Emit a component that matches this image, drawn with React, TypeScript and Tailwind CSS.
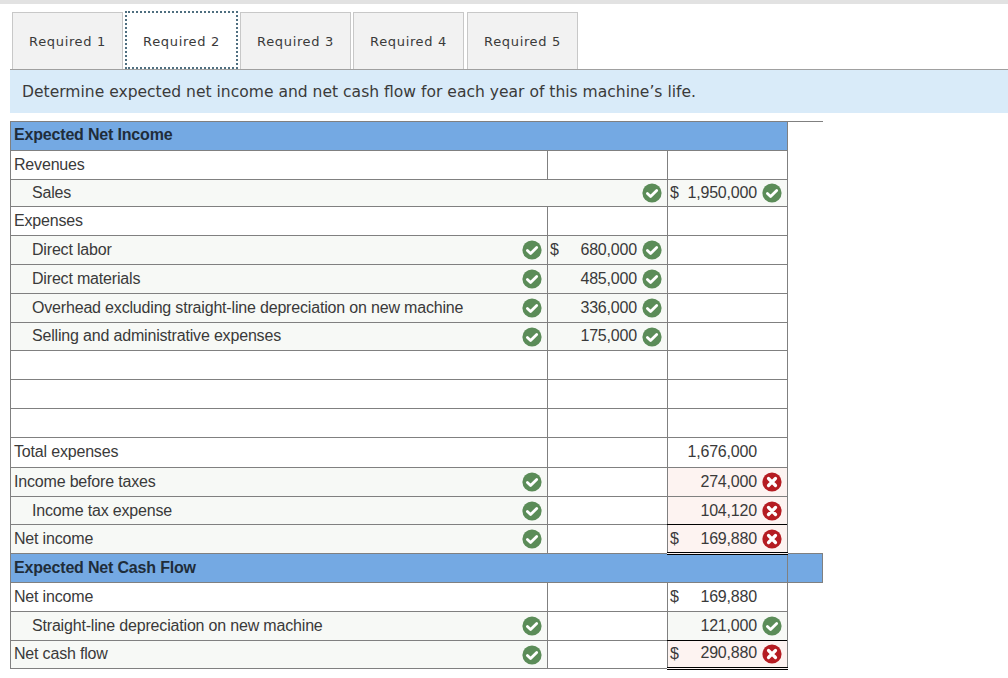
import clsx from "clsx";

type Mark = "ok" | "bad";

type Row = {
  label?: string;
  indent?: boolean;
  height: string;
  lift?: boolean;
  labelMark?: Mark;
  mid?: { dollar?: boolean; value: string; mark?: Mark };
  last?: { dollar?: boolean; value: string; mark?: Mark; top?: boolean; double?: boolean };
  wide?: boolean;
};

const tabs = ["Required 1", "Required 2", "Required 3", "Required 4", "Required 5"];

const incomeRows: Row[] = [
  { label: "Revenues", height: "h-[29px]" },
  { label: "Sales", indent: true, height: "h-[27px]", wide: true, last: { dollar: true, value: "1,950,000", mark: "ok" } },
  { label: "Expenses", height: "h-[29px]" },
  { label: "Direct labor", indent: true, height: "h-[29px]", labelMark: "ok", mid: { dollar: true, value: "680,000", mark: "ok" } },
  { label: "Direct materials", indent: true, height: "h-[29px]", labelMark: "ok", mid: { value: "485,000", mark: "ok" } },
  { label: "Overhead excluding straight-line depreciation on new machine", indent: true, height: "h-[29px]", labelMark: "ok", mid: { value: "336,000", mark: "ok" } },
  { label: "Selling and administrative expenses", indent: true, lift: true, height: "h-[28px]", labelMark: "ok", mid: { value: "175,000", mark: "ok" } },
  { height: "h-[29px]" },
  { height: "h-[29px]" },
  { height: "h-[29px]" },
  { label: "Total expenses", lift: true, height: "h-[30px]", last: { value: "1,676,000" } },
  { label: "Income before taxes", height: "h-[29px]", labelMark: "ok", last: { value: "274,000", mark: "bad", top: true } },
  { label: "Income tax expense", indent: true, height: "h-[28px]", labelMark: "ok", last: { value: "104,120", mark: "bad" } },
  { label: "Net income", height: "h-[29px]", labelMark: "ok", last: { dollar: true, value: "169,880", mark: "bad", top: true, double: true } },
];

const cashRows: Row[] = [
  { label: "Net income", height: "h-[29px]", last: { dollar: true, value: "169,880" } },
  { label: "Straight-line depreciation on new machine", indent: true, height: "h-[29px]", labelMark: "ok", last: { value: "121,000", mark: "ok" } },
  { label: "Net cash flow", lift: true, height: "h-[28px]", labelMark: "ok", last: { dollar: true, value: "290,880", mark: "bad", top: true, double: true } },
];

function MarkIcon({ mark }: { mark: Mark }) {
  if (mark === "ok") {
    return (
      <svg viewBox="0 0 20 20" className="w-[20px] h-[20px] shrink-0">
        <circle cx="10" cy="10" r="9.6" fill="#5b8c58" />
        <path d="M5.4 10.4 L8.6 13.5 L14.7 7.5" fill="none" stroke="#fff" strokeWidth="2.8" strokeLinecap="round" strokeLinejoin="round" />
      </svg>
    );
  }
  return (
    <svg viewBox="0 0 20 20" className="w-[20px] h-[20px] shrink-0">
      <circle cx="10" cy="10" r="9.6" fill="#b51c22" />
      <path d="M6.5 6.5 L13.5 13.5 M13.5 6.5 L6.5 13.5" fill="none" stroke="#fff" strokeWidth="3.2" strokeLinecap="round" />
    </svg>
  );
}

function Amount({ dollar, value, mark, lift }: { dollar?: boolean; value: string; mark?: Mark; lift?: boolean }) {
  return (
    <div className="flex items-center pl-[2px] pr-[5px]">
      {dollar && <span>$</span>}
      <span className={clsx("ml-auto", lift && "pb-[2px]")}>{value}</span>
      <span className="w-[25px] flex justify-end">{mark && <MarkIcon mark={mark} />}</span>
    </div>
  );
}

function SheetRow({ row }: { row: Row }) {
  const answered = row.labelMark || row.wide;
  const last = row.last;
  return (
    <tr className={row.height}>
      <td
        colSpan={row.wide ? 2 : 1}
        className={clsx("border border-[#808080] p-0", answered && "bg-[#f7f9f6]")}
      >
        <div className="flex items-center pr-[5px]">
          <span className={clsx(row.indent ? "pl-[21px]" : "pl-[3px]", row.lift && "pb-[2px]")}>{row.label}</span>
          {row.wide && <span className="ml-auto"><MarkIcon mark="ok" /></span>}
          {row.labelMark && <span className="ml-auto"><MarkIcon mark={row.labelMark} /></span>}
        </div>
      </td>
      {!row.wide && (
        <td className={clsx("border border-[#808080] p-0", row.mid && "bg-[#f7f9f6]")}>
          {row.mid && <Amount {...row.mid} lift={row.lift} />}
        </td>
      )}
      <td
        className={clsx(
          "border border-[#808080] p-0",
          last?.mark === "bad" && "bg-[#fdf3f1]",
          last?.mark === "ok" && "bg-[#f7f9f6]",
          last?.top && "border-t-black",
          last?.double && "border-b-[3px] border-b-black border-double"
        )}
      >
        {last && <Amount dollar={last.dollar} value={last.value} mark={last.mark} lift={row.lift} />}
      </td>
      <td className="p-0" />
    </tr>
  );
}

export default function App() {
  return (
    <div className="w-[1008px] h-[678px] overflow-hidden bg-white">
      <div className="h-[4px] bg-[#e2e2e2]" />
      <div className="flex gap-[2px] pl-[12px] pt-[8px] h-[65px] text-[13px] tracking-[0.65px] text-[#3a3a3a] font-['DejaVu_Sans',sans-serif]">
        {tabs.map((tab, i) =>
          i === 1 ? (
            <div key={tab} className="w-[113px] -mt-[1px] pt-[3px] flex items-center justify-center bg-white border-[2px] border-dotted border-[#4f6f80]">
              {tab}
            </div>
          ) : (
            <div key={tab} className={clsx("w-[111px] pt-[1px] flex items-center justify-center bg-[#f2f2f2] border border-b-0 border-[#c8c8c8]", i === 4 && "ml-[1px]")}>
              {tab}
            </div>
          )
        )}
      </div>
      <div className="ml-[10px] border-t border-[#a0a0a0] h-[44px] bg-[#d9ebf9] pl-[12px] pt-[3px] flex items-center text-[15.55px] text-[#3a3a3a] font-['DejaVu_Sans',sans-serif]">
        Determine expected net income and net cash flow for each year of this machine’s life.
      </div>
      <table className="mt-[8px] ml-[10px] w-[812px] table-fixed border-collapse text-[16px] tracking-[-0.18px] text-[#3a3a3a] font-['Liberation_Sans',Arial,sans-serif]">
        <colgroup>
          <col className="w-[537px]" />
          <col className="w-[120px]" />
          <col className="w-[120px]" />
          <col className="w-[35px]" />
        </colgroup>
        <tbody>
          <tr className="h-[29px]">
            <td colSpan={3} className="border border-[#808080] bg-[#74a9e3] p-0 pl-[3px] pb-[2px] font-bold text-[#1f2d3a]">
              Expected Net Income
            </td>
            <td className="border-t border-[#808080] p-0" />
          </tr>
          {incomeRows.map((row, i) => (
            <SheetRow key={i} row={row} />
          ))}
          <tr className="h-[29px]">
            <td colSpan={3} className="border border-[#808080] bg-[#74a9e3] p-0 pl-[3px] pb-[2px] font-bold text-[#1f2d3a]">
              Expected Net Cash Flow
            </td>
            <td className="border-y border-r border-[#808080] bg-[#74a9e3] p-0" />
          </tr>
          {cashRows.map((row, i) => (
            <SheetRow key={i} row={row} />
          ))}
        </tbody>
      </table>
    </div>
  );
}
